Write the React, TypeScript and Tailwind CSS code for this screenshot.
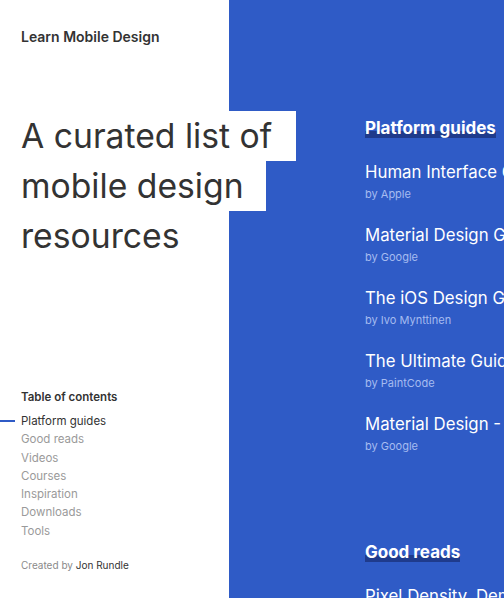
import React from 'react';

const toc = ['Platform guides', 'Good reads', 'Videos', 'Courses', 'Inspiration', 'Downloads', 'Tools'];

const sections = [
  {
    title: 'Platform guides',
    items: [
      { name: 'Human Interface Guidelines', by: 'Apple' },
      { name: 'Material Design Guidelines', by: 'Google' },
      { name: 'The iOS Design Guidelines', by: 'Ivo Mynttinen' },
      { name: 'The Ultimate Guide To iPhone Resolutions', by: 'PaintCode' },
      { name: 'Material Design - Layout', by: 'Google' },
    ],
  },
  {
    title: 'Good reads',
    items: [{ name: 'Pixel Density, Demystified', by: 'Sebastien Gabriel' }],
  },
];

export default function App() {
  return (
    <div
      className="flex h-[600px] w-[504px] overflow-hidden bg-white"
      style={{ fontFamily: 'Inter, "Noto Sans", sans-serif' }}
    >
      {/* Sidebar */}
      <aside className="relative z-10 flex w-[229px] shrink-0 flex-col">
        <div className="pl-[21px] pt-[27px] text-sm font-semibold leading-5 text-[#333]">
          Learn Mobile Design
        </div>
        <h1 className="mt-[64px] pl-[21px] text-[33.7px] font-normal leading-[50px] text-[#333]">
          <div className="w-fit whitespace-nowrap bg-white pr-[24px]">A curated list of</div>
          <div className="w-fit whitespace-nowrap bg-white pr-[22px]">mobile design</div>
          <div className="w-fit whitespace-nowrap bg-white">resources</div>
        </h1>
        <div className="mt-[127px] pl-[21px] text-[11.5px] font-semibold leading-[18px] text-[#333]">
          Table of contents
        </div>
        <ul className="mt-[6px] text-[11.5px] leading-[18.3px]">
          {toc.map((t, i) => (
            <li key={t} className="relative pl-[21px]">
              {i === 0 && (
                <span className="absolute left-0 top-1/2 h-[2px] w-[15px] -translate-y-1/2 bg-[#2f5bc6]" />
              )}
              <span className={i === 0 ? 'text-[#333]' : 'text-[#9a9a9a]'}>{t}</span>
            </li>
          ))}
        </ul>
        <div className="mt-[17px] pl-[21px] text-[10px] leading-4">
          <span className="text-[#8a8a8a]">Created by </span>
          <span className="text-[#333]">Jon Rundle</span>
        </div>
      </aside>

      {/* Content */}
      <main className="h-[598px] flex-1 overflow-hidden bg-[#2f5bc6] pl-[136px] pt-[116px]">
        {sections.map((s, si) => (
          <section key={s.title} className={si > 0 ? 'mt-[86px]' : ''}>
            <h2 className="text-[17px] font-bold leading-6 text-white">
              <span className="whitespace-nowrap shadow-[inset_0_-7px_0_#1f3b8c]">{s.title}</span>
            </h2>
            <div className="mt-[20px] flex flex-col gap-[21px]">
              {s.items.map((it) => (
                <div key={it.name} className="whitespace-nowrap">
                  <div className="text-[16.8px] leading-6 text-white">{it.name}</div>
                  <div className="mt-[3px] text-[11px] leading-[15px] text-[#a6bcf0]">by {it.by}</div>
                </div>
              ))}
            </div>
          </section>
        ))}
      </main>
    </div>
  );
}
